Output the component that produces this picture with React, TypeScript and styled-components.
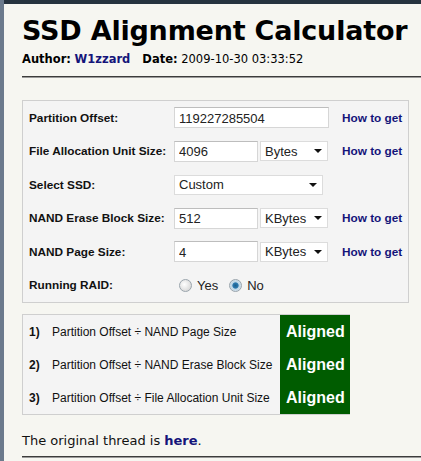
import React, { FC, useState } from 'react'
import styled, { createGlobalStyle } from 'styled-components'

const GlobalStyle = createGlobalStyle`
  html, body {
    margin: 0;
    padding: 0;
    background: #f6f6f1;
  }
`

const rows = [
  { label: 'Partition Offset:', value: '119227285504', unit: null },
  { label: 'File Allocation Unit Size:', value: '4096', unit: 'Bytes' },
  { label: 'NAND Erase Block Size:', value: '512', unit: 'KBytes' },
  { label: 'NAND Page Size:', value: '4', unit: 'KBytes' },
]

const checks = [
  'Partition Offset ÷ NAND Page Size',
  'Partition Offset ÷ NAND Erase Block Size',
  'Partition Offset ÷ File Allocation Unit Size',
]

const App: FC = () => {
  const [raid, setRaid] = useState(false)

  return (
    <>
      <GlobalStyle />
      <Page>
        <SideStrip />
        <Main>
          <TopBar />
          <Content>
            <Title>SSD Alignment Calculator</Title>
            <Meta>
              <b>Author:</b> <Author>W1zzard</Author>
              <Gap />
              <b>Date:</b> 2009-10-30 03:33:52
            </Meta>
            <Rule $gap={10} />

            <Panel>
              <FieldRow>
                <Label>{rows[0].label}</Label>
                <Controls>
                  <TextInput $width={155} defaultValue={rows[0].value} />
                </Controls>
                <HelpLink>How to get</HelpLink>
              </FieldRow>
              <FieldRow>
                <Label>{rows[1].label}</Label>
                <Controls>
                  <TextInput $width={84} defaultValue={rows[1].value} />
                  <FakeSelect $width={68}>Bytes</FakeSelect>
                </Controls>
                <HelpLink>How to get</HelpLink>
              </FieldRow>
              <FieldRow>
                <Label>Select SSD:</Label>
                <Controls>
                  <FakeSelect $width={149}>Custom</FakeSelect>
                </Controls>
                <span />
              </FieldRow>
              {rows.slice(2).map(r => (
                <FieldRow key={r.label}>
                  <Label>{r.label}</Label>
                  <Controls>
                    <TextInput $width={84} defaultValue={r.value} />
                    <FakeSelect $width={68}>{r.unit}</FakeSelect>
                  </Controls>
                  <HelpLink>How to get</HelpLink>
                </FieldRow>
              ))}
              <FieldRow>
                <Label>Running RAID:</Label>
                <Controls>
                  <RadioOption onClick={() => setRaid(true)}>
                    <Radio $on={raid} /> Yes
                  </RadioOption>
                  <RadioOption onClick={() => setRaid(false)}>
                    <Radio $on={!raid} /> No
                  </RadioOption>
                </Controls>
                <span />
              </FieldRow>
            </Panel>

            <Results>
              <ResultList>
                {checks.map((c, i) => (
                  <ResultRow key={c}>
                    <Num>{i + 1})</Num>
                    <span>{c}</span>
                  </ResultRow>
                ))}
              </ResultList>
              <StatusCol>
                {checks.map(c => (
                  <Status key={c}>Aligned</Status>
                ))}
              </StatusCol>
            </Results>

            <Footer>
              The original thread is <FooterLink>here</FooterLink>.
            </Footer>
            <Rule $gap={7} />
          </Content>
        </Main>
      </Page>
    </>
  )
}

export default App

const Page = styled.div`
  display: flex;
  min-height: 461px;
`

const SideStrip = styled.div`
  width: 4px;
  flex: none;
  background: #6b7a8c;
`

const Main = styled.div`
  flex: 1;
  display: flex;
  flex-direction: column;
`

const TopBar = styled.div`
  height: 4px;
  background: #26333f;
`

const Content = styled.div`
  padding: 0 0 0 18px;
`

const Title = styled.h1`
  margin: 12px 0 0;
  font-family: 'DejaVu Sans', Verdana, sans-serif;
  font-weight: bold;
  font-size: 27px;
  line-height: 30px;
  color: #000;
  letter-spacing: -0.2px;
`

const Meta = styled.div`
  margin-top: 6px;
  font-family: 'DejaVu Sans', Verdana, sans-serif;
  font-size: 11.5px;
  line-height: 14px;
  color: #000;
`

const Author = styled.b`
  color: #14147a;
`

const Gap = styled.span`
  display: inline-block;
  width: 12px;
`

const Rule = styled.hr<{ $gap: number }>`
  margin: ${p => p.$gap}px 0 0;
  border: none;
  border-top: 1px solid #3c3c3c;
  border-bottom: 1px solid #9a9a9a;
  height: 0;
`

const Panel = styled.div`
  margin: 22px 0 0;
  width: 387px;
  box-sizing: border-box;
  border: 1px solid #cfcfcf;
  background: #f4f4f4;
  padding: 0 0 0 6px;
  display: flex;
  flex-direction: column;
`

const FieldRow = styled.div`
  display: grid;
  grid-template-columns: 145px 168px auto;
  align-items: center;
  height: 33.5px;
`

const Label = styled.div`
  font-family: 'Liberation Sans', Arial, sans-serif;
  font-weight: bold;
  font-size: 11.8px;
  color: #111;
`

const Controls = styled.div`
  display: flex;
  align-items: center;
  gap: 2px;
`

const TextInput = styled.input<{ $width: number }>`
  width: ${p => p.$width}px;
  height: 21px;
  box-sizing: border-box;
  border: 1px solid #d6d6d6;
  border-top-color: #bdbdbd;
  background: #fff;
  padding: 1px 4px 0;
  font-family: 'Liberation Sans', Arial, sans-serif;
  font-size: 13px;
  color: #222;
  outline: none;
`

const FakeSelect = styled.div<{ $width: number }>`
  width: ${p => p.$width}px;
  height: 20px;
  box-sizing: border-box;
  border: 1px solid #dcdcdc;
  background: #fff;
  padding: 0 5px 0 4px;
  display: flex;
  align-items: center;
  justify-content: space-between;
  font-family: 'Liberation Sans', Arial, sans-serif;
  font-size: 13px;
  color: #222;

  &::after {
    content: '';
    border-left: 4px solid transparent;
    border-right: 4px solid transparent;
    border-top: 4px solid #111;
  }
`

const HelpLink = styled.a`
  font-family: 'Liberation Sans', Arial, sans-serif;
  font-weight: bold;
  font-size: 11.8px;
  color: #14147a;
  text-decoration: none;
`

const RadioOption = styled.label`
  display: inline-flex;
  align-items: center;
  gap: 5px;
  margin: 0 4px 0 5px;
  font-family: 'Liberation Sans', Arial, sans-serif;
  font-size: 13px;
  color: #222;
  cursor: pointer;
`

const Radio = styled.span<{ $on: boolean }>`
  width: 11px;
  height: 11px;
  border-radius: 50%;
  border: 1px solid #9aa4ac;
  background: ${p =>
    p.$on
      ? 'radial-gradient(circle, #1f5f8c 0, #2b7ab0 35%, #bcd4e4 45%, #e6eef4 100%)'
      : 'radial-gradient(circle at 40% 40%, #ffffff 0, #dcdcdc 70%, #c8c8c8 100%)'};
`

const Results = styled.div`
  margin-top: 11px;
  width: 328px;
  display: flex;
  border: 1px solid #cfcfcf;
  border-right: none;
  box-sizing: border-box;
  background: #f4f4f4;
`

const ResultList = styled.div`
  flex: 1;
  padding: 0 0 0 6px;
`

const ResultRow = styled.div`
  display: flex;
  align-items: center;
  height: 33px;
  font-family: 'Liberation Sans', Arial, sans-serif;
  font-size: 12px;
  color: #111;
`

const Num = styled.b`
  width: 23px;
`

const StatusCol = styled.div`
  width: 70px;
  background: #005c00;
  display: flex;
  flex-direction: column;
`

const Status = styled.div`
  height: 33px;
  display: flex;
  align-items: center;
  padding-left: 6px;
  font-family: 'Liberation Sans', Arial, sans-serif;
  font-weight: bold;
  font-size: 16px;
  color: #fff;
`

const Footer = styled.div`
  margin-top: 18px;
  font-family: 'DejaVu Sans', Verdana, sans-serif;
  font-size: 13px;
  line-height: 16px;
  color: #111;
`

const FooterLink = styled.b`
  color: #14147a;
`
